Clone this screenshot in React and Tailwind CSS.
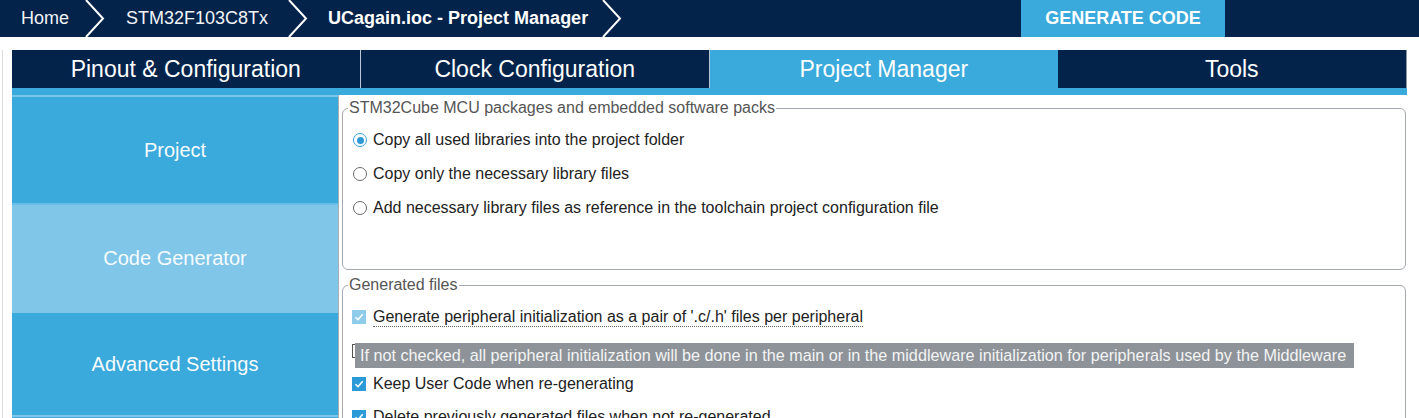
import React from "react";

const Chevron = () => (
  <svg width="22" height="37" viewBox="0 0 22 37" className="shrink-0">
    <polyline points="2,0 19,18.5 2,37" fill="none" stroke="#ffffff" strokeWidth="2" />
  </svg>
);

const Radio = ({ checked, label }) => (
  <div className="h-[34px] flex items-center pl-[10px]">
    <span
      className={`w-[14px] h-[14px] rounded-full border bg-white flex items-center justify-center ${
        checked ? "border-[#3aa0d8]" : "border-[#6b6b6b]"
      }`}
    >
      {checked && <span className="w-[7px] h-[7px] rounded-full bg-[#2c9ad6]" />}
    </span>
    <span className="ml-[6px] text-[16px] text-[#222]">{label}</span>
  </div>
);

const Check = ({ state }) => {
  if (state === "off")
    return <span className="w-[14px] h-[14px] border border-[#555] bg-white shrink-0" />;
  const bg = state === "dim" ? "bg-[#8fcbea]" : "bg-[#2c9ad6]";
  return (
    <span className={`w-[14px] h-[14px] ${bg} flex items-center justify-center shrink-0`}>
      <svg width="10" height="10" viewBox="0 0 10 10">
        <polyline points="1.5,5.2 4,7.7 8.7,2.3" fill="none" stroke="#fff" strokeWidth="1.6" />
      </svg>
    </span>
  );
};

const App = () => {
  return (
    <div className="w-[1419px] h-[418px] overflow-hidden bg-white font-['Liberation_Sans',Arial,sans-serif]">
      {/* top bar */}
      <div className="h-[37px] bg-[#03234b] flex items-center text-[#f2f4f7] text-[18px]">
        <span className="ml-[21px]">Home</span>
        <span className="ml-[15px]"><Chevron /></span>
        <span className="ml-[20px]">STM32F103C8Tx</span>
        <span className="ml-[19px]"><Chevron /></span>
        <span className="ml-[19px] font-bold text-white">UCagain.ioc - Project Manager</span>
        <span className="ml-[13px]"><Chevron /></span>
        <button className="ml-auto mr-[194px] w-[204px] h-[37px] bg-[#3aa9db] text-white font-bold text-[18px]">
          GENERATE CODE
        </button>
      </div>

      {/* body */}
      <div className="pl-[2px] pt-[13px]">
        <div className="border-l border-[#dcdfe2] pl-[9px] pr-[12px]">
          {/* tabs */}
          <div className="grid grid-cols-4 h-[38px] text-white text-[23px] border-r border-[#8a98a8]">
            <div className="bg-[#03234b] flex items-center justify-center border-r border-[#b9c6d3]">
              Pinout &amp; Configuration
            </div>
            <div className="bg-[#03234b] flex items-center justify-center">Clock Configuration</div>
            <div className="bg-[#3aa9db] flex items-center justify-center border-l border-[#b9c6d3]">
              Project Manager
            </div>
            <div className="bg-[#03234b] flex items-center justify-center">Tools</div>
          </div>
          <div className="h-[7px] bg-[#3aa9db]" />

          <div className="flex">
            {/* sidebar */}
            <div className="w-[326px] shrink-0 text-[#f6fbfe] text-[20px]">
              <div className="h-[108px] border-t-2 border-[#78c6ea] bg-[#3aa9db] flex items-center justify-center">
                Project
              </div>
              <div className="h-[108px] border-t-2 border-[#68bde6] bg-[#7fc6e9] flex items-center justify-center">
                Code Generator
              </div>
              <div className="h-[106px] border-t-2 border-[#7fc6e9] border-b-2 border-b-[#7fc6e9] bg-[#3aa9db] flex items-center justify-center">
                Advanced Settings
              </div>
              <div className="h-[20px] bg-[#3aa9db]" />
            </div>

            {/* content */}
            <div className="flex-1 border-l border-[#a9b0b5] pl-[3px] pr-[1px] pt-[4px] text-[#222]">
              <fieldset className="h-[171px] border border-[#a3a9ae] rounded-[6px] pl-0">
                <legend className="ml-[5px] px-[1px] text-[16px] text-[#555] leading-[18px]">
                  STM32Cube MCU packages and embedded software packs
                </legend>
                <div className="pt-[6px]">
                  <Radio checked label="Copy all used libraries into the project folder" />
                  <Radio label="Copy only the necessary library files" />
                  <Radio label="Add necessary library files as reference in the toolchain project configuration file" />
                </div>
              </fieldset>

              <fieldset className="mt-[6px] h-[200px] border border-[#a3a9ae] rounded-[6px]">
                <legend className="ml-[5px] px-[1px] text-[16px] text-[#555] leading-[18px]">
                  Generated files
                </legend>
                <div className="pt-[6px] text-[16px]">
                  <div className="h-[34px] flex items-center pl-[9px]">
                    <Check state="dim" />
                    <span className="ml-[7px] border-b border-dotted border-[#666] leading-[19px]">
                      Generate peripheral initialization as a pair of '.c/.h' files per peripheral
                    </span>
                  </div>
                  <div className="relative h-[33px] flex items-center pl-[9px]">
                    <Check state="off" />
                    <div className="absolute left-[12px] top-[9px] w-[999px] h-[25px] bg-[#8d9399] text-[#f4f4f4] text-[16.2px] pl-[5px] flex items-center whitespace-nowrap">
                      If not checked, all peripheral initialization will be done in the main or in the middleware initialization for peripherals used by the Middleware
                    </div>
                  </div>
                  <div className="h-[33px] flex items-center pl-[9px]">
                    <Check state="on" />
                    <span className="ml-[7px]">Keep User Code when re-generating</span>
                  </div>
                  <div className="h-[34px] flex items-center pl-[9px]">
                    <Check state="on" />
                    <span className="ml-[7px]">Delete previously generated files when not re-generated</span>
                  </div>
                </div>
              </fieldset>
            </div>
          </div>
        </div>
      </div>
    </div>
  );
};

export default App;
